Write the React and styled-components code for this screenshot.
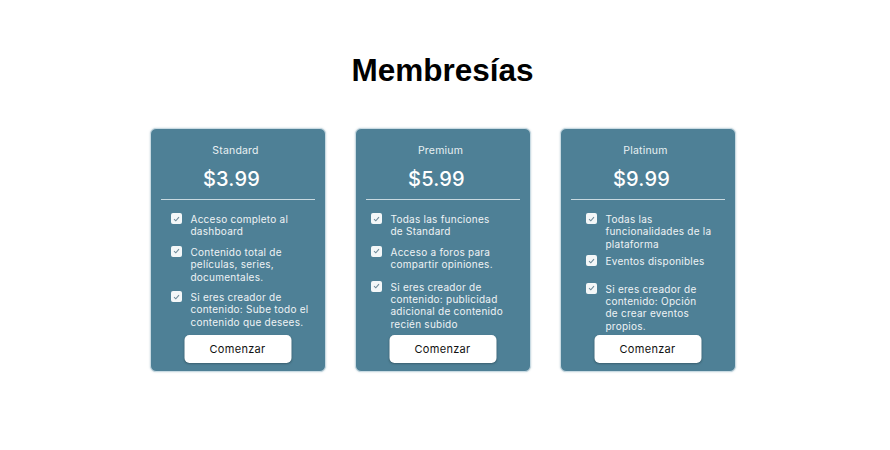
import React from 'react';
import styled, { createGlobalStyle } from 'styled-components';

const GlobalStyle = createGlobalStyle`
  body {
    margin: 0;
    background: #ffffff;
    font-family: 'Liberation Sans', Arial, sans-serif;
  }
`;

const planes = [
  {
    nombre: 'Standard',
    precio: '$3.99',
    inset: 21,
    items: [
      { texto: 'Acceso completo al dashboard', ancho: 105 },
      { texto: 'Contenido total de películas, series, documentales.', ancho: 100 },
      { texto: 'Si eres creador de contenido: Sube todo el contenido que desees.', ancho: 125 },
    ],
  },
  {
    nombre: 'Premium',
    precio: '$5.99',
    inset: 16,
    items: [
      { texto: 'Todas las funciones de Standard', ancho: 100 },
      { texto: 'Acceso a foros para compartir opiniones.', ancho: 105 },
      { texto: 'Si eres creador de contenido: publicidad adicional de contenido recién subido', ancho: 118, extra: 2 },
    ],
  },
  {
    nombre: 'Platinum',
    precio: '$9.99',
    inset: 26,
    items: [
      { texto: 'Todas las funcionalidades de la plataforma', ancho: 110 },
      { texto: 'Eventos disponibles', ancho: 110, extra: -3 },
      { texto: 'Si eres creador de contenido: Opción de crear eventos propios.', ancho: 100, extra: 7 },
    ],
  },
];

function Check() {
  return (
    <Box>
      <svg width="7" height="6" viewBox="0 0 7 6">
        <path d="M1 3.2 L2.8 4.8 L6 1.2" fill="none" stroke="#6f8a99" strokeWidth="1.1" />
      </svg>
    </Box>
  );
}

function App() {
  return (
    <Page>
      <GlobalStyle />
      <Title>Membresías</Title>
      <Row>
        {planes.map((plan) => (
          <Card key={plan.nombre}>
            <PlanName>{plan.nombre}</PlanName>
            <Price>{plan.precio}</Price>
            <Divider />
            <List $inset={plan.inset}>
              {plan.items.map((item, i) => (
                <Item key={i} $extra={item.extra || 0}>
                  <Check />
                  <ItemText $ancho={item.ancho}>{item.texto}</ItemText>
                </Item>
              ))}
            </List>
            <Button type="button">Comenzar</Button>
          </Card>
        ))}
      </Row>
    </Page>
  );
}

export default App;

const Page = styled.div`
  width: 890px;
  height: 450px;
  display: flex;
  flex-direction: column;
  align-items: center;
`;

const Title = styled.h1`
  margin: 53px 0 0;
  font-size: 31.5px;
  line-height: 34px;
  font-weight: 700;
  color: #000000;
  margin-right: 5px;
`;

const Row = styled.div`
  display: flex;
  gap: 29px;
  margin-top: 41px;
  margin-left: -5px;
`;

const Card = styled.div`
  width: 176px;
  height: 244px;
  box-sizing: border-box;
  background: #4e8096;
  border: 1px solid #c9dbe3;
  border-radius: 6px;
  box-shadow: 0 0 2px rgba(78, 128, 150, 0.35);
  display: flex;
  flex-direction: column;
  align-items: center;
  padding: 0 10px;
  position: relative;
`;

const PlanName = styled.div`
  margin-top: 15px;
  margin-right: 4px;
  font-family: 'Inter', 'Liberation Sans', sans-serif;
  font-size: 10.5px;
  line-height: 14px;
  letter-spacing: 0.2px;
  color: #e8f0f3;
`;

const Price = styled.div`
  margin-top: 9px;
  margin-right: 12px;
  font-family: 'Inter', 'Liberation Sans', sans-serif;
  font-size: 20px;
  line-height: 24px;
  font-weight: 500;
  letter-spacing: 0.2px;
  color: #ffffff;
`;

const Divider = styled.div`
  align-self: stretch;
  height: 1px;
  background: #c8d9e0;
  margin-top: 8px;
`;

const List = styled.ul`
  list-style: none;
  margin: 13px 0 0;
  padding: 0 0 0 ${(p) => p.$inset - 11}px;
  align-self: stretch;
  display: flex;
  flex-direction: column;
  gap: 8px;
  flex: 1;
`;

const Item = styled.li`
  display: flex;
  align-items: flex-start;
  gap: 9px;
  margin-top: ${(p) => p.$extra}px;
`;

const Box = styled.span`
  flex: none;
  width: 11px;
  height: 11px;
  background: #f4f7f8;
  border-radius: 2px;
  display: flex;
  align-items: center;
  justify-content: center;
`;

const ItemText = styled.span`
  max-width: ${(p) => p.$ancho}px;
  font-family: 'Inter', 'Liberation Sans', sans-serif;
  font-size: 10px;
  line-height: 12.4px;
  letter-spacing: 0.25px;
  color: #eef3f5;
`;

const Button = styled.button`
  position: absolute;
  left: 50%;
  bottom: 8px;
  transform: translateX(-50%);
  width: 107px;
  height: 28px;
  background: #ffffff;
  border: none;
  border-radius: 5px;
  box-shadow: 0 1px 2px rgba(0, 0, 0, 0.25);
  font-family: 'Inter', 'Liberation Sans', sans-serif;
  font-size: 11px;
  letter-spacing: 0.3px;
  color: #111111;
  cursor: pointer;
`;
